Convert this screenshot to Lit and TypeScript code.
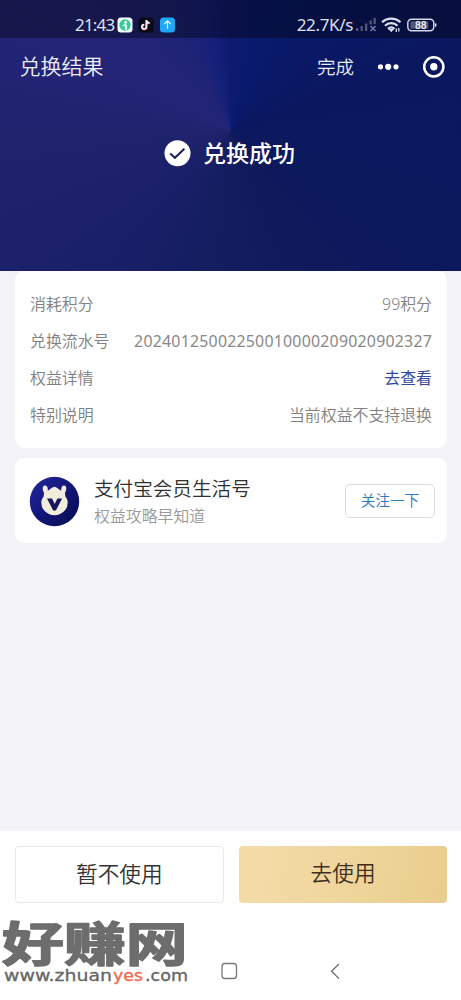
import { LitElement, html, css } from "lit";
import { customElement } from "lit/decorators.js";

const rows = [
  { label: "消耗积分", value: "99积分" },
  { label: "兑换流水号", value: "20240125002250010000209020902327" },
  { label: "权益详情", value: "去查看", link: true },
  { label: "特别说明", value: "当前权益不支持退换" },
];

@customElement("status-bar")
class StatusBar extends LitElement {
  static styles = css`
    :host { display: flex; height: 38px; padding: 12px 24px 0 75px; box-sizing: border-box; align-items: center; justify-content: space-between;
      background: rgba(0, 0, 0, 0.36); color: #dfe0f2; font: 17px/26px "Noto Sans", sans-serif; }
    .side { display: flex; align-items: center; }
    .time { width: 42px; font-size: 17px; letter-spacing: -0.8px; white-space: nowrap; }
    .speed { font-size: 17px; letter-spacing: -0.35px; white-space: nowrap; margin-right: 3px; }
    svg { display: block; }
  `;
  render() {
    return html`
      <div class="side">
        <span class="time">21:43</span>
        <svg width="60" height="16" viewBox="0 0 60 16">
          <rect x="0.5" y="0.5" width="15" height="15" rx="3.5" fill="#f2fffb" />
          <circle cx="8" cy="8" r="5.7" fill="#38c79a" />
          <circle cx="8.600" cy="5.200" r="1.500" fill="#e8fff7" />
          <path d="M6 8.500l2.500-1v4.500M9.500 8.500v3.500" stroke="#e8fff7" stroke-width="1.300" fill="none" stroke-linecap="round" />
          <rect x="21.5" y="0.5" width="15" height="15" rx="3.5" fill="#0b0918" />
          <path d="M29.7 3.3v6.8a2.2 2.2 0 1 1-2.2-2.2M29.7 3.5c.3 1.8 1.4 2.7 3.3 2.8" fill="none" stroke="#f44b72" stroke-width="2" />
          <path d="M29.3 3v6.8a2.2 2.2 0 1 1-2.2-2.2M29.3 3.2c.3 1.8 1.4 2.7 3.2 2.8" fill="none" stroke="#eefcff" stroke-width="1.7" />
          <rect x="43" y="0.5" width="15" height="15" rx="3.5" fill="#20a8f7" />
          <path d="M50.5 12V4M47.3 7l3.2-3.2L53.7 7" fill="none" stroke="#dff5ff" stroke-width="1.2" />
        </svg>
      </div>
      <div class="side">
        <span class="speed">22.7K/s</span>
        <svg width="81" height="18" viewBox="0 0 81 18">
          <g fill="#51567f">
            <rect x="0" y="12" width="2.300" height="3" /><rect x="4.500" y="10" width="2.300" height="5" />
            <rect x="9" y="7.500" width="2.300" height="7.500" /><rect x="13.500" y="4.500" width="2.300" height="4" />
            <rect x="17.500" y="2" width="2.300" height="6" />
          </g>
          <path d="M14.500 10l5 5M19.500 10l-5 5" stroke="#7b80a6" stroke-width="1.400" />
          <g fill="none" stroke="#dfe1f2" stroke-width="2.200">
            <path d="M26 6.300a13.500 13.500 0 0 1 18.500 0" /><path d="M29 9.700a9 9 0 0 1 12.500 0" /><path d="M32 12.800a5 5 0 0 1 6.500 0" />
          </g>
          <path d="M32.500 13h5.500l-2.700 3.200z" fill="#dfe1f2" />
          <path d="M40.300 12.500v3.500M42.800 12v3.500" stroke="#dfe1f2" stroke-width="1.300" />
          <rect x="51.800" y="3.200" width="26" height="11.600" rx="3.800" fill="none" stroke="#d5d7ea" stroke-width="1.500" />
          <rect x="54.300" y="5.300" width="18" height="7.500" rx="1.500" fill="#50557a" />
          <rect x="79" y="7.200" width="1.500" height="3.600" rx="0.700" fill="#d5d7ea" />
          <text x="64.800" y="12.700" text-anchor="middle" font-family="Roboto, sans-serif" font-weight="500" font-size="10.300" fill="#f0f1fa">88</text>
        </svg>
      </div>`;
  }
}

@customElement("result-header")
class ResultHeader extends LitElement {
  static styles = css`
    :host { display: flex; flex-direction: column; height: 270.5px; color: #fff;
      background:
        conic-gradient(from 0deg at 231px 130px, #0e1a70 0deg, #091a6e 16deg, #091867 38deg, #0b185f 75deg, #0d195c 130deg, #101b5c 160deg,
          #141d60 190deg, #1a2068 225deg, #20236e 270deg, #242478 300deg, #202476 330deg, #16207a 348deg, #0e1a70 360deg); }
    .nav { display: flex; height: 56px; align-items: center; justify-content: space-between; padding: 0 15px 0 19.5px; color: #eceefa; }
    .title { font-size: 21px; font-weight: 350; line-height: 30px; }
    .tools { display: flex; align-items: center; }
    .done { font-size: 18.5px; line-height: 30px; font-weight: 350; position: relative; top: 1px; }
    svg { display: block; }
    .tools svg { margin-left: 23px; }
    .success { display: flex; align-items: center; justify-content: center; gap: 12px; margin-top: 40px; height: 38px; padding-right: 2px; font-size: 23px; font-weight: 500; }
    .success span { position: relative; top: -1px; }
  `;
  render() {
    return html`
      <status-bar></status-bar>
      <div class="nav">
        <span class="title">兑换结果</span>
        <div class="tools">
          <span class="done">完成</span>
          <svg width="69" height="24" viewBox="0 0 69 24">
            <g fill="#fff"><circle cx="3.500" cy="12.800" r="2.600" /><circle cx="11.200" cy="12.800" r="3.100" /><circle cx="19" cy="12.800" r="2.600" /></g>
            <circle cx="56.800" cy="12.800" r="9.600" fill="none" stroke="#fff" stroke-width="2.500" /><circle cx="56.800" cy="12.800" r="3.700" fill="#fff" />
          </svg>
        </div>
      </div>
      <div class="success">
        <svg width="27" height="27" viewBox="0 0 27 27"><circle cx="13.500" cy="13.200" r="13" fill="#fff" />
          <path d="M6.200 13.500l4.700 4.300 9.500-9" fill="none" stroke="#1b2060" stroke-width="2" /></svg>
        <span>兑换成功</span>
      </div>`;
  }
}

@customElement("follow-card")
class FollowCard extends LitElement {
  static styles = css`
    :host { display: flex; align-items: center; height: 85px; box-sizing: border-box; padding: 0 12px 0 14px; background: #fff; border-radius: 9px; }
    svg { display: block; flex: none; position: relative; top: 1px; }
    .text { flex: 1; margin-left: 14px; }
    .name { font-size: 19.6px; line-height: 28px; color: #303030; font-weight: 350; padding-top: 1px; }
    .sub { font-size: 15.9px; line-height: 24px; color: #999; font-weight: 350; margin-top: 1px; }
    .follow { box-sizing: border-box; width: 90px; height: 34px; border: 1.5px solid #d3dde2; border-radius: 5px; color: #2b78bd;
      font-size: 14.6px; line-height: 30px; text-align: center; font-weight: 350; }
  `;
  render() {
    return html`
      <svg width="51" height="51" viewBox="0 0 51 51">
        <defs><linearGradient id="g" x1="0" y1="0" x2="1" y2="1"><stop offset="0" stop-color="#242b9c" /><stop offset="0.450" stop-color="#15167c" /><stop offset="1" stop-color="#080d4c" /></linearGradient></defs>
        <circle cx="25.500" cy="25.500" r="24.700" fill="url(#g)" />
        <g fill="#f2ecdc">
          <ellipse cx="16.300" cy="13.200" rx="2.500" ry="3.700" transform="rotate(-10 16.300 13.200)" />
          <ellipse cx="34.700" cy="13.200" rx="2.500" ry="3.700" transform="rotate(10 34.700 13.200)" />
          <path d="M25.500 10.800c2 0 5.500 3.800 10.500 6.200l.3 3.500c1.700 2 2.400 3.800 2.400 6.200a13.200 12.500 0 0 1-26.400 0c0-2.400.7-4.200 2.400-6.200l.3-3.500c5-2.400 8.500-6.200 10.500-6.200z" />
        </g>
        <path d="M16 15.500l1 4M35 15.500l-1 4" stroke="#f2ecdc" stroke-width="1.800" />
        <path d="M18 22.500h5l2.700 5.500 2.700-5.500h4.700l-6.200 12h-2.700z" fill="#17165f" />
      </svg>
      <div class="text"><div class="name">支付宝会员生活号</div><div class="sub">权益攻略早知道</div></div>
      <div class="follow">关注一下</div>`;
  }
}

@customElement("site-mark")
class SiteMark extends LitElement {
  static styles = css`
    :host { display: block; }
    svg { display: block; overflow: visible; }
    .big { font: 700 48px "Noto Sans CJK SC", sans-serif; stroke: #6d6d6d; stroke-width: 1.6px; stroke-linejoin: round; }
    .url { font: 15px "DejaVu Sans", sans-serif; stroke-width: 0.3px; }
  `;
  render() {
    return html`<svg width="190" height="68" viewBox="0 0 190 68">
      <g fill="#6d6d6d">
        <text class="big" transform="translate(2 40.500) scale(1.290 0.970)" x="0" y="0">好赚网</text>
      </g>
      <text class="url" x="4" y="60.500" fill="#666" stroke="#666" textLength="108" lengthAdjust="spacingAndGlyphs">www.zhuan</text>
      <text class="url" x="113" y="60.500" fill="#ee6a4c" stroke="#ee6a4c" textLength="30" lengthAdjust="spacingAndGlyphs">yes</text>
      <text class="url" x="145" y="60.500" fill="#666" stroke="#666" textLength="43" lengthAdjust="spacingAndGlyphs">.com</text>
    </svg>`;
  }
}

@customElement("app-root")
class AppRoot extends LitElement {
  static styles = css`
    :host { display: flex; flex-direction: column; width: 461px; height: 1000px; overflow: hidden; background: #f2f2f8;
      font-family: "Noto Sans", "Noto Sans CJK SC", sans-serif; }
    .content { flex: 1; display: flex; flex-direction: column; gap: 10px; padding: 0.5px 14px 0 15px; }
    .card { background: #fff; border-radius: 9px; height: 177px; box-sizing: border-box; padding: 14px 15px; color: #808080; font-size: 15.9px; font-weight: 350; }
    .row { display: flex; justify-content: space-between; align-items: center; height: 37px; line-height: 24px; white-space: nowrap; }
    .num { letter-spacing: 0.22px; font-weight: 400; color: #888; }
    .link { color: #3347a0; font-weight: 400; }
    .actions { display: flex; gap: 15px; background: #fff; height: 89px; box-sizing: border-box; padding: 15px 14px 0 14.500px; }
    .btn { flex: 1; box-sizing: border-box; height: 57px; border-radius: 4px; text-align: center; font-size: 21.700px; line-height: 53px; font-weight: 350; }
    .plain { border: 1.500px solid #e8e8e8; color: #333; }
    .gold { background: linear-gradient(100deg, #f4dcaa, #efd59b 55%, #e9cd8d); color: #3d3020; }
    .sysnav { display: flex; height: 80px; background: #fff; }
    .keys { display: block; }
  `;
  render() {
    return html`
      <result-header></result-header>
      <div class="content">
        <div class="card">
          ${rows.map((r) => html`<div class="row"><span>${r.label}</span><span class=${r.link ? "link" : /^\d{5}/.test(r.value) ? "num" : ""}>${r.value}</span></div>`)}
        </div>
        <follow-card></follow-card>
      </div>
      <div class="actions"><div class="btn plain">暂不使用</div><div class="btn gold">去使用</div></div>
      <div class="sysnav">
        <site-mark></site-mark>
        <svg class="keys" width="180" height="80" viewBox="0 0 180 80">
          <rect x="32" y="43.500" width="14.500" height="15" rx="3" fill="none" stroke="#777" stroke-width="1.300" />
          <path d="M149 44l-7.500 7.300 7.500 7.300" fill="none" stroke="#666" stroke-width="1.200" />
        </svg>
      </div>`;
  }
}
